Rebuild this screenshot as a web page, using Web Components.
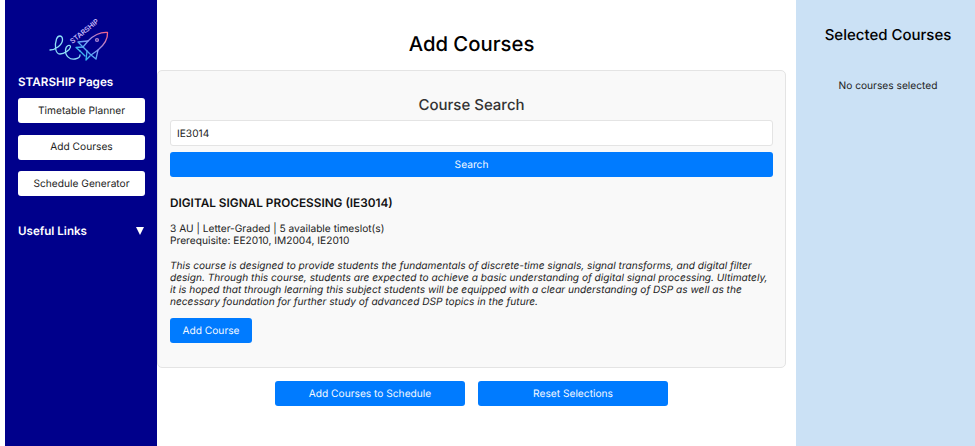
<!DOCTYPE html>
<html>
<head>
<meta charset="utf-8">
<style>
  html, body { margin: 0; padding: 0; height: 100%; }
  body { font-family: Inter, "Liberation Sans", sans-serif; background: white; overflow: hidden; text-rendering: geometricPrecision; }
</style>
</head>
<body>
<app-shell>
  <side-bar slot="side"></side-bar>
  <main-panel slot="main"></main-panel>
  <selected-panel slot="right"></selected-panel>
</app-shell>

<script>
class appshell extends HTMLElement{
  constructor(){
    super();
    this.attachShadow({mode:'open'}).innerHTML = `
    <style>
      :host { display: grid; grid-template-columns: 152px 639px 179px; padding-left: 5px; height: 446px; }
    </style>
    <slot name="side"></slot><slot name="main"></slot><slot name="right"></slot>`;
  }
}
customElements.define('app-shell',appshell);

class blueButton extends HTMLElement{
  constructor(){
    super();
    this.attachShadow({mode:'open'}).innerHTML = `
    <style>
      :host { display: flex; align-items: center; justify-content: center; height: 25px; box-sizing: border-box; padding-top: 1px;
        background: #007bff; color: #f4f9ff; border-radius: 3px; font-size: 10.2px; }
    </style>
    <slot></slot>`;
  }
}
customElements.define('blue-button',blueButton);

class navbutton extends HTMLElement{
  constructor(){
    super();
    this.attachShadow({mode:'open'}).innerHTML = `
    <style>
      :host { display: flex; align-items: center; justify-content: center; height: 25px;
        background: white; color: #222; border-radius: 3px; font-size: 10.2px; }
    </style>
    <slot></slot>`;
  }
}
customElements.define('nav-button',navbutton);

class sidebar extends HTMLElement{
  constructor(){
    super();
    this.attachShadow({mode:'open'}).innerHTML = `
    <style>
      :host { display: flex; flex-direction: column; background: #00008b; color: white; padding: 0 12px 0 13px; height: 446px; box-sizing: border-box; }
      svg { display: block; width: 62px; height: 50px; margin: 14px 0 0 30px; }
      h3 { margin: 10px 0 8px; font-size: 11.7px; line-height: 16px; font-weight: 600; }
      .links { display: flex; flex-direction: column; gap: 11.5px; }
      .useful { display: flex; justify-content: space-between; align-items: center; margin-top: 27px; font-size: 11.6px; line-height: 16px; font-weight: 600; }
      .tri { width: 0; height: 0; border-left: 4.5px solid transparent; border-right: 4.5px solid transparent; border-top: 8px solid white; margin-right: 1px; }
    </style>
    <svg viewBox="48 14 62 50" fill="none" stroke-linecap="round" stroke-linejoin="round">
      <defs>
        <linearGradient id="g" gradientUnits="userSpaceOnUse" x1="80" y1="60" x2="108" y2="32">
          <stop offset="0" stop-color="#19c6f2"/><stop offset=".5" stop-color="#8a98f5"/><stop offset="1" stop-color="#ff5f7e"/>
        </linearGradient>
      </defs>
      <path d="M50 50 C55 50 63 45 62.5 39 C62 35 58 35 56.5 39 C54.5 45 55 54 60 54 C64 54 70 50 70.5 47 C70.5 44 66 45 65.5 50 C65 56 70 60 75 59 C78 58.5 80 57 80 55" stroke="#8fe0f7" stroke-width="1.3"/>
      <text x="72.6" y="44" font-family="Inter, sans-serif" font-size="7" font-weight="600" fill="#c4b5f5" transform="rotate(-39.5 72.6 44)">STARSHIP</text>
      <g stroke="url(#g)" stroke-width="1.3">
        <path d="M107.5 32.5 C100 32 93 36 88 41 L83 47 L91 55 L98 50 C104 45 108 39 107.5 32.5 Z"/>
        <path d="M88 41 L78 42 L83 47"/>
        <path d="M98 50 L96 59 L91 55"/>
        <path d="M83 47 L76 47.5 L80 51"/>
        <path d="M87 51 L86 60 L90 56"/>
        <path d="M80 51 L85 56"/>
        <circle cx="97" cy="40" r="1.4"/>
      </g>
    </svg>
    <h3>STARSHIP Pages</h3>
    <div class="links">
      <nav-button>Timetable Planner</nav-button>
      <nav-button>Add Courses</nav-button>
      <nav-button>Schedule Generator</nav-button>
    </div>
    <div class="useful"><span>Useful Links</span><span class="tri"></span></div>`;
  }
}
customElements.define('side-bar',sidebar);

class coursecard extends HTMLElement{
  constructor(){
    super();
    this.attachShadow({mode:'open'}).innerHTML = `
    <style>
      :host { display: block; box-sizing: border-box; height: 298px; padding: 25px 12px 0; background: #f9f9f9;
        border: 1px solid #e4e4e4; border-radius: 5px; color: #222; font-size: 10.2px; line-height: 12.3px; white-space: nowrap; }
      h2 { margin: 0 0 6px; text-align: center; font-size: 15px; line-height: 18px; font-weight: 500; color: #333; }
      .field { display: flex; align-items: center; box-sizing: border-box; height: 26px; padding: 2px 6px 0; background: white;
        border: 1px solid #e4e4e4; border-radius: 3px; font-size: 10.2px; }
      blue-button.search { margin-top: 6px; }
      h3 { margin: 19px 0 12px; font-size: 11.8px; line-height: 15px; font-weight: 600; color: #111; }
      p { margin: 0; }
      .desc { margin: 12px 0 9px; font-size: 10.15px; font-style: italic; }
      .add { width: 82px; }
    </style>
    <h2>Course Search</h2>
    <div class="field">IE3014</div>
    <blue-button class="search">Search</blue-button>
    <h3>DIGITAL SIGNAL PROCESSING (IE3014)</h3>
    <p>3 AU | Letter-Graded | 5 available timeslot(s)<br>Prerequisite: EE2010, IM2004, IE2010</p>
    <p class="desc">This course is designed to provide students the fundamentals of discrete-time signals, signal transforms, and digital filter<br>design. Through this course, students are expected to achieve a basic understanding of digital signal processing. Ultimately,<br>it is hoped that through learning this subject students will be equipped with a clear understanding of DSP as well as the<br>necessary foundation for further study of advanced DSP topics in the future.</p>
    <blue-button class="add">Add Course</blue-button>`;
  }
}
customElements.define('course-card',coursecard);

class mainpanel extends HTMLElement{
  constructor(){
    super();
    this.attachShadow({mode:'open'}).innerHTML = `
    <style>
      :host { display: block; padding-right: 10px; color: #000; }
      h1 { margin: 0; padding-top: 32px; height: 38px; text-align: center; font-size: 20.3px; line-height: 24px; font-weight: 500; }
      .actions { display: flex; justify-content: center; gap: 13px; margin-top: 13px; }
      .actions blue-button { width: 190px; }
    </style>
    <h1>Add Courses</h1>
    <course-card></course-card>
    <div class="actions">
      <blue-button>Add Courses to Schedule</blue-button>
      <blue-button>Reset Selections</blue-button>
    </div>`;
  }
}
customElements.define('main-panel',mainpanel);

class selectedpanel extends HTMLElement{
  constructor(){
    super();
    this.attachShadow({mode:'open'}).innerHTML = `
    <style>
      :host { display: block; height: 446px; box-sizing: border-box; padding-left: 5px; background: #cbe1f5; text-align: center; color: #000; }
      h2 { margin: 0; padding-top: 26px; font-size: 15px; line-height: 18px; font-weight: 500; }
      p { margin: 35px 0 0; font-size: 10.2px; line-height: 14px; color: #222; }
    </style>
    <h2>Selected Courses</h2>
    <p>No courses selected</p>`;
  }
}
customElements.define('selected-panel',selectedpanel);
</script>
</body>
</html>
